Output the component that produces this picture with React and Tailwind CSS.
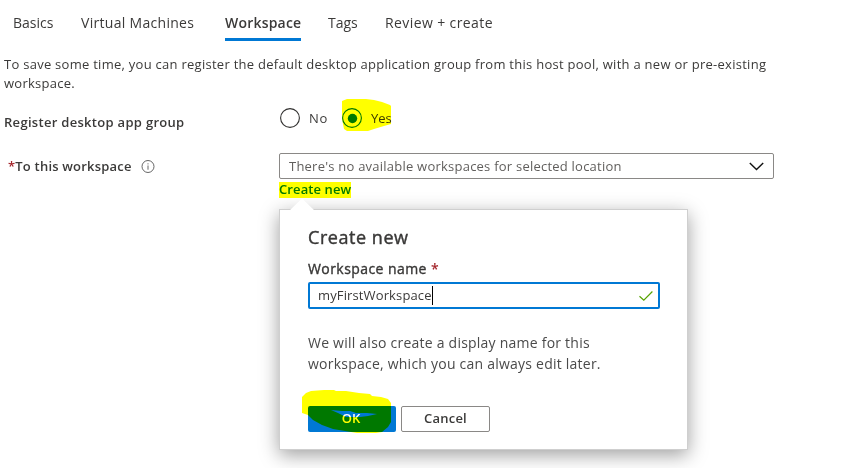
const tabs = [
  { label: 'Basics', cls: 'w-[41px] mr-[27px]' },
  { label: 'Virtual Machines', cls: 'w-[113px] mr-[31px] tracking-[0.3px]' },
  { label: 'Workspace', cls: 'w-[76px] mr-[27px] tracking-[0.2px]', active: true },
  { label: 'Tags', cls: 'w-[30px] mr-[27px]' },
  { label: 'Review + create', cls: 'w-[110px] tracking-[0.4px]' },
];

function Tabs() {
  return (
    <nav className="flex h-[41px] pl-[13px] text-[14px] leading-[20px]">
      {tabs.map((t) => (
        <div
          key={t.label}
          className={`shrink-0 whitespace-nowrap pt-[13px] ${t.cls} ${
            t.active ? 'border-b-[3px] border-[#0078d4] font-semibold' : ''
          }`}
        >
          {t.label}
        </div>
      ))}
    </nav>
  );
}

function InfoIcon() {
  return (
    <svg className="ml-[9px] h-[14px] w-[14px]" viewBox="0 0 14 14" fill="none" stroke="#555" strokeWidth="0.9">
      <circle cx="7" cy="6.5" r="6" />
      <path d="M7 5.5v4.2M7 3.3v1.1" />
    </svg>
  );
}

function Radio({ checked }) {
  return (
    <svg className="h-[20px] w-[20px]" viewBox="0 0 20 20" fill="none">
      <circle cx="10" cy="10" r="9.4" stroke={checked ? '#0078d4' : '#323130'} strokeWidth="1.1" />
      {checked && <circle cx="10.5" cy="10.5" r="4.7" fill="#0078d4" />}
    </svg>
  );
}

function CreatePopup() {
  return (
    <section className="absolute left-[279px] top-[209px] h-[241px] w-[409px] border border-[#cfcfcf] bg-white pl-[28px] pr-[27px] pt-[15px] shadow-[0_5px_18px_rgba(0,0,0,0.38)]">
      <svg className="absolute left-[8px] top-[-12px] h-[13px] w-[28px]" viewBox="0 0 28 13">
        <path d="M1 13L14 0.5L27 13Z" fill="#fff" />
      </svg>
      <h2 className="text-[18px] leading-[25px] tracking-[0.55px] [-webkit-text-stroke:0.4px_#323130]">Create new</h2>
      <div className="mt-[9px] text-[14px] leading-[20px] tracking-[0.43px]">
        <span className="[-webkit-text-stroke:0.35px_#323130]">Workspace name</span>{' '}
        <span className="font-semibold text-[#a4262c]">*</span>
      </div>
      <div className="mt-[3px] flex h-[27px] w-[352px] items-center rounded-[2px] border-2 border-[#0078d4] pl-[8px] pr-[5px]">
        <span className="whitespace-nowrap text-[13px] leading-[19px] tracking-[0.13px]">myFirstWorkspace</span>
        <span className="h-[19px] w-px bg-black" />
        <svg className="ml-auto h-[12px] w-[14px]" viewBox="0 0 14 12" fill="none" stroke="#57a300" strokeWidth="1.2">
          <path d="M0.5 6.2L4.8 10.2L13.4 1.5" />
        </svg>
      </div>
      <p className="mt-[23px] whitespace-nowrap text-[14px] leading-[21px] tracking-[0.23px] text-[#4a4a4a]">
        We will also create a display name for this
        <br />
        workspace, which you can always edit later.
      </p>
      <div className="mt-[32px] flex gap-[5px] text-[13px] font-semibold">
        <button className="h-[26px] w-[88px] rounded-[2px] bg-[#0078d4] pr-[2px] text-white">OK</button>
        <button className="h-[26px] w-[89px] rounded-[2px] border border-[#8a8886] bg-white tracking-[0.2px]">Cancel</button>
      </div>
    </section>
  );
}

function Highlights() {
  return (
    <svg className="pointer-events-none absolute left-0 top-0 h-[468px] w-[846px] mix-blend-multiply" viewBox="0 0 846 468" fill="#ffff00">
      <path d="M342 101L347 99H366L374 100L382 102L390 105L391 106V124L384 126L374 129L368 131H347L344 129L342 119Z" />
      <path d="M279 182H351V198H279Z" />
      <path fillRule="evenodd" d="M302 397L306 393L311 391L324 390H334L336 391H346L359 393L370 394L372 396L381 397L388 399L391 403V422L388 427L382 432L376 433H357L345 431L333 429L322 425L313 420L308 415L302 413ZM331 410L342 411H350L356 413H367L377 414L368 416L360 417H346L338 413Z" />
    </svg>
  );
}

export default function App() {
  return (
    <main className="relative h-[468px] w-[846px] overflow-hidden bg-white font-['Open_Sans','Noto_Sans',sans-serif] text-[#3b3a39]">
      <Tabs />
      <p className="ml-[4px] mt-[14px] whitespace-nowrap text-[13px] leading-[19px] tracking-[0.27px]">
        To save some time, you can register the default desktop application group from this host pool, with a new or pre-existing
        <br />
        workspace.
      </p>
      <div className="mt-[15px] flex h-[20px] items-center text-[13px]">
        <div className="w-[280px] pl-[4px] pt-[10px] font-semibold tracking-[0.3px]">Register desktop app group</div>
        <Radio />
        <span className="ml-[9px] w-[33px] pt-[2px] tracking-[0.8px]">No</span>
        <Radio checked />
        <span className="ml-[9px] pt-[2px]">Yes</span>
      </div>
      <div className="mt-[25px] flex h-[26px] items-center text-[13px]">
        <div className="flex w-[279px] items-center pl-[8px] pt-[2px] font-semibold tracking-[0.2px]">
          <span className="text-[#a4262c]">*</span>To this workspace
          <InfoIcon />
        </div>
        <div className="flex h-[26px] w-[495px] items-center rounded-[2px] border border-[#8a8886] pl-[9px] pr-[9px] text-[#605e5c]">
          <span className="whitespace-nowrap pt-[2px] tracking-[0.23px]">There's no available workspaces for selected location</span>
          <svg className="ml-auto h-[9px] w-[15px]" viewBox="0 0 15 9" fill="none" stroke="#111" strokeWidth="1.4">
            <path d="M0.8 1L7.5 7.6L14.2 1" />
          </svg>
        </div>
      </div>
      <a className="ml-[279px] mt-px block text-[13px] font-semibold leading-[18px] tracking-[0.1px] text-[#0078d4]">Create new</a>
      <CreatePopup />
      <Highlights />
    </main>
  );
}
